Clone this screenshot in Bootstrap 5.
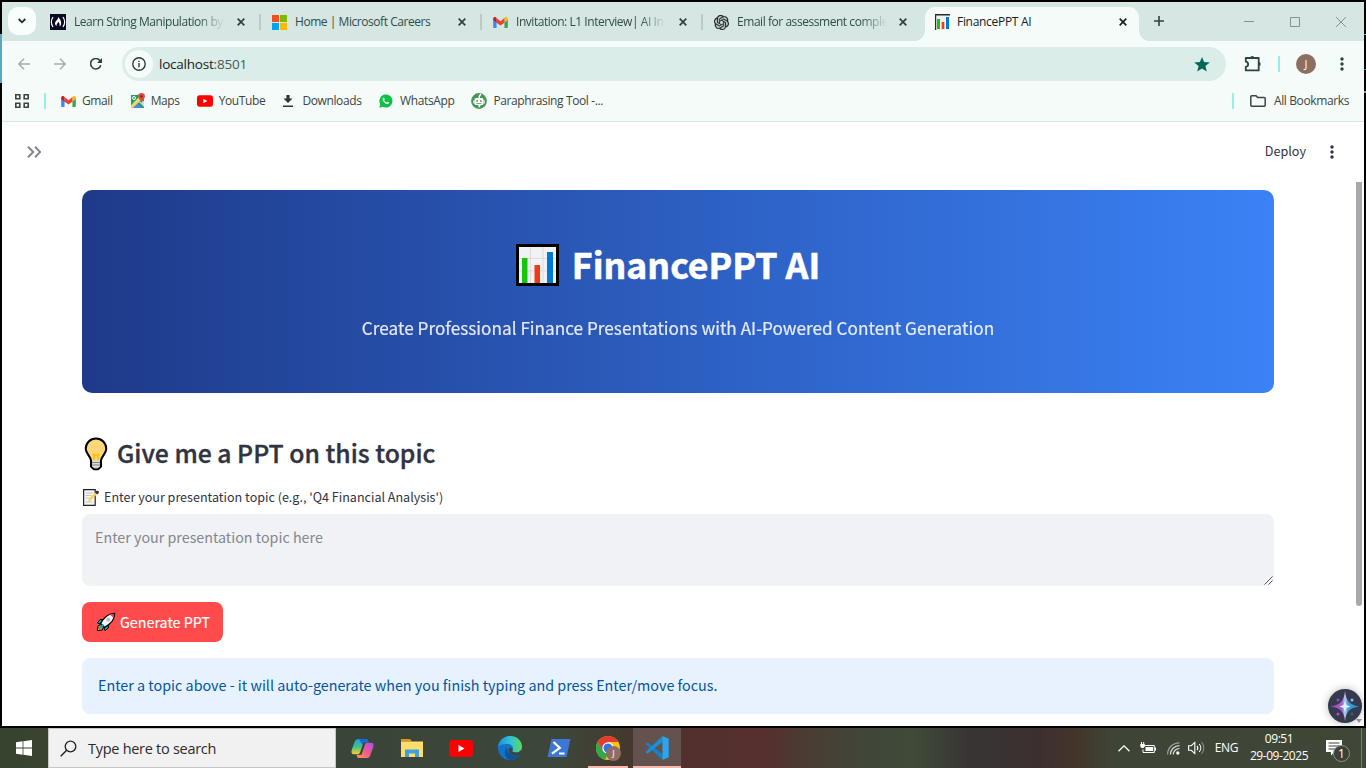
<!DOCTYPE html>
<html lang="en">
<head>
<meta charset="utf-8">
<meta name="viewport" content="width=device-width, initial-scale=1">
<title>FinancePPT AI</title>
<link href="https://cdn.jsdelivr.net/npm/bootstrap@5.3.0/dist/css/bootstrap.min.css" rel="stylesheet">
<style>
  html, body { height: 100%; overflow: hidden; }
  body { font-family: "Open Sans", "Noto Sans", sans-serif; font-size: 12px; line-height: 16px; background: #000; color: #30403d; }
  svg { display: block; flex: none; }
  .ui { white-space: nowrap; flex: none; }

  .desktop { width: 1366px; height: 768px; }
  .frame { height: 728px; padding: 2px; background: #000; }
  .edge-glow { left: 0; top: 34px; width: 2px; height: 49px; background: #5aa6c6; }
  .edge-ticks { right: 0; top: 34px; width: 2px; height: 60px; background: linear-gradient(#6fa9bd 1px, transparent 1px 35px, #3f7f99 35px 36px, transparent 36px 57px, #8a979c 57px 59px, transparent 59px); }
  .window { background: #f5fbf9; }

  /* tab strip */
  .tabstrip { height: 39px; background: #d6e6e2; border-top: 1px solid #dfeae7; }
  .tab-search { width: 28px; height: 28px; margin: 4px 0 0 6px; border-radius: 10px; background: #f8fefc; }
  .tabcell { width: 221px; height: 38px; padding-left: 10px; flex: none; }
  .tabcell.first { margin-left: 4px; }
  .tabcell .label { width: 150px; margin-left: 8px; white-space: nowrap; letter-spacing: -.45px; color: #2f4d48; }
  .tabcell .fade-end { -webkit-mask-image: linear-gradient(90deg, #000 124px, transparent 150px); mask-image: linear-gradient(90deg, #000 124px, transparent 150px); }
  .tabcell .sep { width: 2px; height: 16px; margin-left: 14px; background: #c1c9c7; }
  .tabcell.open { width: 214px; height: 34px; margin: 4px 0 0 1px; padding: 0 0 4px 10px; border-radius: 10px 10px 0 0; background: #f5fbf9; }
  .tabcell.open .label { margin-left: 7px; color: #17211f; letter-spacing: -.3px; }
  .foot { bottom: 0; width: 10px; height: 10px; }
  .foot.l { left: -10px; background: radial-gradient(circle at 0 0, transparent 9.5px, #f5fbf9 10px); }
  .foot.r { right: -10px; background: radial-gradient(circle at 100% 0, transparent 9.5px, #f5fbf9 10px); }

  /* toolbar */
  .toolrow { height: 46px; }
  .omni { width: 1104px; height: 34px; border-radius: 17px; background: #daede8; }
  .host { margin-left: 6px; font-size: 13.5px; letter-spacing: -.22px; color: #17211f; }
  .host span { color: #4a5a57; }
  .info-dot { width: 28px; height: 28px; background: #f5fbf9; margin-left: 3px; }
  .accent { width: 2px; height: 16px; background: #95f2e2; }
  .avatar { width: 20px; height: 20px; background: #8d6e63; color: #fff; font-size: 11px; }
  .bookmarks { height: 35px; padding-bottom: 6px; border-bottom: 1px solid #d5e5e1; color: #3c4543; }
  .bookmarks .ui { letter-spacing: -.38px; }

  /* page */
  .page { height: 604px; background: #fff; color: #31333f; font-family: "Noto Sans CJK SC", sans-serif; }
  .apphead { height: 60px; }
  .deploy { font-size: 12.6px; padding-bottom: 2px; }
  .content { width: 1192px; margin-left: 80px; }
  .hero { height: 203px; margin-top: 8px; padding-top: 51px; border-radius: 10px; background: linear-gradient(90deg, #1e3a8a 0%, #3b82f6 100%); color: #fff; }
  .hero h1 { gap: 13px; margin: 0 20px 25px 0; font-size: 35.6px; line-height: 48px; font-weight: 700; -webkit-text-stroke: .6px #fff; }
  .hero h1 .ui { padding-bottom: 2px; }
  .hero p { font-size: 17.2px; line-height: 28px; opacity: .87; -webkit-text-stroke: .2px #fff; }
  .topic-title { gap: 7px; margin: 43px 0 15px; font-size: 24.75px; line-height: 36px; font-weight: 500; height: 36px; -webkit-text-stroke: .35px #31333f; }
  .topic-title .ui { padding-bottom: 4px; }
  .field-label { gap: 5px; margin-bottom: 7px; font-size: 12.55px; line-height: 20px; }
  .field { height: 72px; border-radius: 8px; background: #f0f2f6; border: 0; padding: 11px 13px; font-size: 14.3px; line-height: 24px; resize: none; }
  .field::placeholder { color: #85868f; opacity: 1; }
  .grip { right: 1px; bottom: 1px; }
  .go, .go:hover { width: 141px; height: 40px; border-radius: 8px; background: #ff4b4b; color: #fff; font-size: 14.3px; gap: 4px; -webkit-text-stroke: .15px #fff; }
  .note { height: 56px; padding-bottom: 2px; border-radius: 8px; background: #e8f2ff; color: #0054a3; font-size: 14.33px; }
  .scrollthumb { left: 1354px; top: 60px; width: 6px; height: 424px; background: #a8a8ad; border-radius: 0 0 3px 3px; }
  .scrollend { right: 2px; bottom: 3px; }
  .assist { right: 2px; bottom: 3px; width: 34px; height: 34px; background: #363a4d; box-shadow: 0 0 8px rgba(0,0,0,.28); }

  /* taskbar */
  .taskbar { height: 40px; color: #fff;
    background: linear-gradient(90deg, #38432f 0, #3b4537 340px, #3d4739 560px, #45382f 630px, #532f2e 690px, #55302f 770px, #4b3b33 800px, #40473a 870px, #3f4a38 915px, #383434 970px, #3c302f 1040px, #44342a 1075px, #3e4436 1110px, #3f4737 1366px); }
  .seek { width: 288px; height: 40px; background: #f1f1f1; border: 1px solid #c6c6c6; color: #2b2b2b; font-size: 14.5px; letter-spacing: -.28px; }
  .seek .ui { padding-top: 2px; }
  .app { width: 49px; height: 40px; }
  .app.live::after { content: ""; position: absolute; bottom: 0; left: 5px; right: 4px; height: 2px; background: #f6b8ae; }
  .app.front { width: 48px; margin-left: 1px; background: #64524f; }
  .app.front::after { left: 0; right: 0; }
  .mini { right: 11px; bottom: 7px; width: 15px; height: 15px; background: #8d6e63; font-size: 9px; line-height: 15px; }
  .eng { letter-spacing: -.4px; }
  .clock { width: 58px; line-height: 17.5px; letter-spacing: -.45px; }
  .count { left: 7px; top: 5px; width: 17px; height: 17px; background: #3b4039; border: 1px solid #8d938a; font-size: 12px; line-height: 15px; }
  .peek { width: 1px; height: 40px; margin-left: 19px; margin-right: 4px; background: #767c70; }
</style>
</head>
<body>
<svg width="0" height="0" class="position-absolute">
  <defs>
    <symbol id="x" viewBox="0 0 8 8"><path d="M.7.7l6.600 6.600M7.300.7L.7 7.300" stroke="currentColor" stroke-width="1.700"/></symbol>
    <symbol id="gmail" viewBox="0 0 16 12"><path d="M0 2v8.600c0 .8.600 1.400 1.300 1.400h2.400V4.500z" fill="#4285f4"/><path d="M16 2v8.600c0 .8-.6 1.400-1.300 1.400h-2.400V4.500z" fill="#34a853"/><path d="M12.300 1.200v5L16 3.400V2c0-1.700-1.900-2.500-3.200-1.500z" fill="#fbbc04"/><path d="M3.700 6.200V1.200L8 4.500l4.300-3.300v5L8 9.400z" fill="#ea4335"/><path d="M0 2v1.400l3.700 2.800V1.200L3.200.5C1.900-.5 0 .3 0 2z" fill="#c5221f"/></symbol>
    <symbol id="chart" viewBox="0 0 43 42"><path fill="#000" d="M0 0h43v42H0z"/><path fill="#f2f2f2" d="M3 3h37v36H3z"/><path d="M14.500 3v36M27 3v36M3 14.500h37M3 27h37" stroke="#dcdcdc"/><path fill="#16c60c" d="M6 14h5.500v25H6z"/><path fill="#f03a17" d="M18.500 21H24v18h-5.500z"/><path fill="#0078d7" d="M31 8h6v31h-6z"/></symbol>
    <symbol id="play" viewBox="0 0 24 17"><rect width="24" height="17" rx="4" fill="#f00"/><path d="M9.500 5v7l6-3.500z" fill="#fff"/></symbol>
    <symbol id="dots" viewBox="0 0 4 14"><g fill="currentColor"><circle cx="2" cy="2" r="1.700"/><circle cx="2" cy="7" r="1.700"/><circle cx="2" cy="12" r="1.700"/></g></symbol>
  </defs>
</svg>

<div class="desktop d-flex flex-column position-relative overflow-hidden">
  <div class="frame">
    <div class="window h-100 overflow-hidden">

      <div class="tabstrip d-flex">
        <div class="tab-search d-flex align-items-center justify-content-center">
          <svg width="8" height="6" viewBox="0 0 8 6"><path d="M.7 1L4 4.300 7.300 1" fill="none" stroke="#1c2b28" stroke-width="1.800"/></svg>
        </div>
        <div class="tabcell first d-flex align-items-center">
          <svg width="16" height="16" viewBox="0 0 16 16"><path fill="#0a0a23" d="M0 0h16v16H0z"/><path d="M3 3Q-.3 8 3 13M13 3q3.300 5 0 10" fill="none" stroke="#fff" stroke-width="1.200"/><path d="M8 3c2.500 2 3.500 5 3 7.500-.3 1-1 1.500-1.700 1.700C10.500 10 8.700 9 8.600 7.500 7.800 9.500 6 10 6.800 12.200 4 10.500 5 8 6.500 6.500 7.500 5.500 8.200 4.500 8 3z" fill="#fff"/></svg>
          <div class="label fade-end">Learn String Manipulation by</div>
          <svg class="ms-auto" width="8" height="8"><use href="#x"/></svg><span class="sep"></span>
        </div>
        <div class="tabcell d-flex align-items-center" style="padding-left:11px">
          <svg width="15" height="15" viewBox="0 0 15 15"><path fill="#f25022" d="M0 0h7v7H0z"/><path fill="#7fba00" d="M8 0h7v7H8z"/><path fill="#00a4ef" d="M0 8h7v7H0z"/><path fill="#ffb900" d="M8 8h7v7H8z"/></svg>
          <div class="label">Home | Microsoft Careers</div>
          <svg class="ms-auto" width="8" height="8"><use href="#x"/></svg><span class="sep"></span>
        </div>
        <div class="tabcell d-flex align-items-center" style="padding-left:11px">
          <svg width="15" height="11"><use href="#gmail"/></svg>
          <div class="label fade-end">Invitation: L1 Interview| AI In</div>
          <svg class="ms-auto" width="8" height="8"><use href="#x"/></svg><span class="sep"></span>
        </div>
        <div class="tabcell d-flex align-items-center" style="padding-left:11px">
          <svg width="15" height="15" viewBox="0 0 24 24" fill="#202826"><path d="M22.280 9.820a5.980 5.980 0 0 0-.52-4.910 6.050 6.050 0 0 0-6.510-2.900A6.070 6.070 0 0 0 4.980 4.180a5.980 5.980 0 0 0-4 2.900 6.050 6.050 0 0 0 .74 7.100 5.980 5.980 0 0 0 .51 4.910 6.050 6.050 0 0 0 6.520 2.900A5.980 5.980 0 0 0 13.260 24a6.060 6.060 0 0 0 5.770-4.210 5.990 5.990 0 0 0 4-2.900 6.060 6.060 0 0 0-.75-7.070zm-9.020 12.610a4.480 4.480 0 0 1-2.880-1.040l.14-.08 4.780-2.760a.8.8 0 0 0 .39-.68v-6.740l2.020 1.170.04.050v5.580a4.500 4.500 0 0 1-4.490 4.500zM3.600 18.300a4.470 4.470 0 0 1-.54-3.010l.14.080 4.780 2.760a.77.77 0 0 0 .78 0l5.840-3.370v2.330l-.03.060L9.740 19.950A4.500 4.500 0 0 1 3.600 18.300zM2.340 7.900a4.480 4.480 0 0 1 2.370-1.980v5.680a.77.77 0 0 0 .38.680l5.820 3.350-2.020 1.170h-.07L3.990 14A4.500 4.500 0 0 1 2.340 7.870zm16.600 3.860l-5.840-3.390L15.120 7.200h.07l4.830 2.790a4.490 4.490 0 0 1-.68 8.100v-5.670a.79.79 0 0 0-.4-.66zm2.010-3.020l-.14-.09-4.780-2.780a.78.78 0 0 0-.78 0L9.410 9.230V6.900l.03-.06 4.830-2.790a4.500 4.500 0 0 1 6.680 4.660zM8.310 12.860l-2.020-1.160-.04-.060V6.070a4.500 4.500 0 0 1 7.380-3.450l-.14.080-4.780 2.760a.8.800 0 0 0-.4.680zm1.090-2.360l2.600-1.500 2.600 1.500v3l-2.600 1.500-2.600-1.500z" stroke="#202826" stroke-width=".5"/></svg>
          <div class="label fade-end">Email for assessment comple</div>
          <svg class="ms-auto" style="margin-right:17px" width="8" height="8"><use href="#x"/></svg>
        </div>
        <div class="tabcell open d-flex align-items-center position-relative">
          <span class="foot l position-absolute"></span><span class="foot r position-absolute"></span>
          <svg width="15" height="16" viewBox="0 0 15 16"><path d="M0 0h15v16H0z" fill="#f4eff2"/><path d="M.5 16V.7H15" fill="none" stroke="#2a2a2a" stroke-width="1.400"/><path d="M2 5h3v10H2z" fill="#16c60c"/><path d="M6.700 8h2.600v7H6.700z" fill="#f03a17"/><path d="M11 3h3v12h-3z" fill="#0078d7"/></svg>
          <div class="label">FinancePPT AI</div>
          <svg class="ms-auto" style="margin-right:12px" width="8" height="8" color="#17211f"><use href="#x"/></svg>
        </div>
        <svg style="margin:12px 0 0 14px" width="12" height="12" viewBox="0 0 12 12"><path d="M6 1v10M1 6h10" stroke="#33423f" stroke-width="1.600"/></svg>
        <div class="d-flex align-items-center ms-auto" style="gap:36px;padding-right:18px">
          <svg width="10" height="10"><path d="M0 4.500h10" stroke="#86918e"/></svg>
          <svg width="10" height="10"><path d="M.5.500h9v9h-9z" fill="none" stroke="#86918e"/></svg>
          <svg width="10" height="10"><path d="M0 0l10 10M10 0L0 10" stroke="#86918e"/></svg>
        </div>
      </div>

      <div class="toolrow d-flex align-items-center">
        <svg style="margin-left:16px" width="12" height="12" viewBox="0 0 12 12"><path d="M12 6H1M6 .7L.8 6 6 11.300" fill="none" stroke="#a5adab" stroke-width="1.500"/></svg>
        <svg style="margin-left:24px" width="12" height="12" viewBox="0 0 12 12"><path d="M0 6h11M6 .7L11.200 6 6 11.300" fill="none" stroke="#a5adab" stroke-width="1.500"/></svg>
        <svg style="margin-left:24px" width="12" height="12" viewBox="0 0 12 12"><path d="M10.800 7.200A5.200 5.200 0 1 1 10 2.700" fill="none" stroke="#2f403d" stroke-width="1.600"/><path d="M12 0v5H7z" fill="#2f403d"/></svg>
        <div class="omni d-flex align-items-center" style="margin-left:20px">
          <div class="info-dot rounded-circle d-flex align-items-center justify-content-center">
            <svg width="14" height="14" viewBox="0 0 14 14"><circle cx="7" cy="7" r="6.200" fill="none" stroke="#2f3b39" stroke-width="1.400"/><path d="M6.300 6h1.400v4.300H6.300zM6.300 3.700h1.400v1.400H6.300z" fill="#2f3b39"/></svg>
          </div>
          <div class="ui host">localhost<span>:8501</span></div>
          <svg class="ms-auto" style="margin-right:16px" width="16" height="15" viewBox="0 0 16 15"><path d="M8 0l2.100 5.100 5.700.4-4.400 3.600 1.400 5.500L8 11.600l-4.800 3 1.400-5.500L.2 5.500l5.700-.4z" fill="#00695c"/></svg>
        </div>
        <svg style="margin-left:18px" width="18" height="18" viewBox="0 0 18 18"><path d="M1.800 3h12.900v12.400H1.800v-3.600c3.100-.4 3.100-4.800 0-5.200z" fill="none" stroke="#2b4540" stroke-width="1.800" stroke-linejoin="round"/><path d="M6.200 3a2 2 0 0 1 4 0zM14.700 7a2 2 0 0 1 0 4z" fill="#2b4540"/></svg>
        <span class="accent" style="margin-left:16px"></span>
        <div class="avatar rounded-circle d-flex align-items-center justify-content-center" style="margin-left:16px">J</div>
        <svg style="margin-left:24px" width="4" height="14" color="#2b4540"><use href="#dots"/></svg>
      </div>

      <div class="bookmarks d-flex align-items-center">
        <svg style="margin-left:13px" width="14" height="14" viewBox="0 0 14 14"><path d="M.8.800h4v4h-4zM9.200.800h4v4h-4zM.8 9.200h4v4h-4zM9.200 9.200h4v4h-4z" fill="none" stroke="#3c4543" stroke-width="1.600"/></svg>
        <span class="accent" style="margin-left:15px"></span>
        <svg style="margin-left:15px" width="15" height="11"><use href="#gmail"/></svg>
        <div class="ui" style="margin-left:6px">Gmail</div>
        <svg style="margin-left:17px" width="16" height="16" viewBox="0 0 16 16"><path d="M1 2h13v13H1z" fill="#1ea362"/><path d="M1 12.500L11 2h3v2L3 15H1z" fill="#fff3d0"/><path d="M1 13L10 4l1.500 1.500L3 15H1z" fill="#ffd04b"/><path d="M3 15l4.500-4.600L12 15z" fill="#4a89f3"/><path d="M9 9l5 5V8z" fill="#d5d9dc"/><circle cx="4" cy="5" r="1.500" fill="none" stroke="#fff"/><path d="M11.500 0a3.400 3.400 0 0 1 3.400 3.500c0 2.500-2.600 3-3.300 7-.8-4-3.500-4.600-3.500-7A3.400 3.400 0 0 1 11.500 0z" fill="#dc4b3e"/><circle cx="11.500" cy="3.500" r="1.200" fill="#8c2a1f"/></svg>
        <div class="ui" style="margin-left:5px">Maps</div>
        <svg style="margin-left:17px" width="16" height="12"><use href="#play"/></svg>
        <div class="ui" style="margin-left:6px">YouTube</div>
        <svg style="margin-left:18px" width="10" height="12" viewBox="0 0 10 12"><path d="M3.400 0h3.200v3.500H9.500L5 8 .5 3.500h2.900zM0 10.400h10V12H0z" fill="#2f3635"/></svg>
        <div class="ui" style="margin-left:9px">Downloads</div>
        <svg style="margin-left:17.500px" width="14" height="14" viewBox="0 0 15 15"><path d="M.3 14.700l1-3.800a7 7 0 1 1 2.700 2.700z" fill="#0cc143"/><path d="M5.200 3.900c-.6-.1-1.400.6-1.400 1.700 0 2 3 5.100 5.300 5.100 1.200 0 2-.7 1.900-1.500-.1-.4-1.600-1.100-1.900-1l-.9 1C7.200 9 5.900 7.700 5.500 6.700l.6-.9c0-.5-.4-1.800-.9-1.900z" fill="#fff"/></svg>
        <div class="ui" style="margin-left:7px">WhatsApp</div>
        <svg style="margin-left:17px" width="16" height="16" viewBox="0 0 16 16"><circle cx="8" cy="8" r="7.900" fill="#499557"/><path d="M8.300 5V3.200L10 .8" stroke="#fff" stroke-width="1.500" fill="none"/><rect x="3.500" y="5" width="9" height="7" rx="1.500" fill="#fff"/><path d="M2.300 7.500h1.200v3H2.300zM12.500 7.500h1.200v3h-1.200zM7 12h3l-2 3z" fill="#fff"/><path d="M5.300 7.200h1.700v1.600H5.300zM9 7.200h1.700v1.600H9zM5.500 10.300h5v.8h-5z" fill="#499557"/></svg>
        <div class="ui" style="margin-left:6px">Paraphrasing Tool -...</div>
        <div class="d-flex align-items-center ms-auto" style="padding-right:15px">
          <span class="accent"></span>
          <svg style="margin-left:16px" width="16" height="12" viewBox="0 0 16 12"><path d="M.8 10.300V1.700c0-.5.300-.9.900-.9H6l1.600 1.700h6.700c.6 0 .9.400.9.900v6.900c0 .5-.3.900-.9.900H1.700c-.6 0-.9-.4-.9-.9z" fill="none" stroke="#3c4543" stroke-width="1.500"/></svg>
          <div class="ui" style="margin-left:8px">All Bookmarks</div>
        </div>
      </div>

      <div class="page position-relative overflow-hidden">
        <div class="apphead d-flex align-items-center">
          <svg style="margin-left:25px" width="14" height="12" viewBox="0 0 14 12"><path d="M1 .8L6.200 6 1 11.200M8 .8L13.200 6 8 11.200" fill="none" stroke="#83858e" stroke-width="2"/></svg>
          <div class="ui deploy ms-auto">Deploy</div>
          <svg style="margin:0 30px 0 24px" width="4" height="14"><use href="#dots"/></svg>
        </div>
        <div class="content">
          <div class="hero d-flex flex-column align-items-center">
            <h1 class="d-flex align-items-center" style="height:48px"><svg width="43" height="42"><use href="#chart"/></svg><span class="ui">FinancePPT AI</span></h1>
            <p class="ui mb-0">Create Professional Finance Presentations with AI-Powered Content Generation</p>
          </div>
          <h2 class="topic-title d-flex align-items-center">
            <svg width="28" height="34" viewBox="0 0 28 34"><path d="M14 1.500A10.300 10.300 0 0 0 3.700 11.800c0 4.700 4.800 7.200 5.300 11.500v6.200l3 2.700h4l3-2.700v-6.200c.5-4.300 5.300-6.800 5.300-11.500A10.300 10.300 0 0 0 14 1.500z" fill="#ffd679" stroke="#000" stroke-width="2"/><path d="M10 23.500h8v6l-2.400 1.800h-3.200L10 29.500z" fill="#d8d8d8"/><path d="M10 25.500h8M10 28h8" stroke="#888"/><path d="M12 23v-5l-1.500-1M16 23v-5l1.500-1M12 18h4" fill="none" stroke="#ffb900" stroke-width="1.500"/></svg>
            <span class="ui">Give me a PPT on this topic</span>
          </h2>
          <label class="field-label d-flex align-items-center" for="topic">
            <svg width="17" height="17" viewBox="0 0 17 17"><path d="M1.600.700h11.600v15.600H1.600z" fill="#f5f5f5" stroke="#222" stroke-width="1.200"/><path d="M3.500 4h7M3.500 6.500h6M3.500 9h4M3.500 13h7" stroke="#c4c4c4"/><path d="M6 12.500l1-3L14 2.800l1.700 1.600-7 7.200z" fill="#ffcf58"/><path d="M13 3.300l1.300-1.500 2.400.3.100 1.900-1.600 1.500z" fill="#333"/></svg>
            <span class="ui">Enter your presentation topic (e.g., 'Q4 Financial Analysis')</span>
          </label>
          <div class="position-relative">
            <textarea id="topic" class="field d-block w-100" placeholder="Enter your presentation topic here"></textarea>
            <svg class="grip position-absolute" width="9" height="9" viewBox="0 0 9 9"><path d="M.5 8.500l8-8M4.500 8.500l4-4" stroke="#555"/></svg>
          </div>
          <button class="go btn d-flex align-items-center border-0 p-0 mt-3" type="button">
            <svg style="margin-left:14px" width="20" height="20" viewBox="0 0 20 20"><path d="M1.300 18.700l.8-5 2.600-.9 2.600 2.600-.9 2.600z" fill="#f7941d" stroke="#000"/><path d="M6.500 7.500H4.200L1.300 11l3 1zM12.500 13.500v2.300L9 18.700l-1-3z" fill="#00a9d6" stroke="#000"/><path d="M18.700 1.300c.3 5.200-2.700 10-10.200 14l-3.800-3.800C8.700 4 13.500 1 18.700 1.300z" fill="#f4f4f4" stroke="#000" stroke-width="1.200"/><path d="M18.200 1.800c-1.600 0-3 .2-4.200.7l3.500 3.500c.5-1.200.7-2.600.7-4.200z" fill="#e8303a"/><circle cx="12.300" cy="7.700" r="1.900" fill="#b8bcc2"/><path d="M3.500 16.500l4-4" stroke="#00a9d6" stroke-width="2"/></svg>
            <span class="ui">Generate PPT</span>
          </button>
          <div class="note d-flex align-items-center px-3 mt-3"><span class="ui">Enter a topic above - it will auto-generate when you finish typing and press Enter/move focus.</span></div>
        </div>
        <div class="scrollthumb position-absolute"></div>
        <svg class="scrollend position-absolute" width="6" height="4"><path d="M0 0h6L3 4z" fill="#9a9a9f"/></svg>
        <div class="assist position-absolute rounded-circle">
          <svg width="34" height="34" viewBox="0 0 34 34"><defs><linearGradient id="g1"><stop offset="0" stop-color="#c23fc0"/><stop offset=".4" stop-color="#a66ad8"/><stop offset=".5" stop-color="#c9dcff"/><stop offset=".6" stop-color="#4aa6e4"/><stop offset="1" stop-color="#1b8fdc"/></linearGradient></defs><path d="M17 2c1 9.500 4.500 14 14.500 15.500C21.500 19 18 22.500 17 32c-1-9.500-4.500-13-14.500-14.500C12.500 16 16 11.500 17 2z" fill="url(#g1)" fill-opacity=".9"/><path d="M17 12l1.500 4 4 1.500-4 1.500L17 23l-1.500-4-4-1.500 4-1.500z" fill="#d6f2ff"/><circle cx="10" cy="11" r="1.500" fill="#8a4fc0"/><circle cx="24" cy="11" r="1.500" fill="#7fc4ec"/><circle cx="10" cy="25" r="1.500" fill="#b04bd0"/><circle cx="24" cy="25" r="1.400" fill="#2a648f"/></svg>
        </div>
      </div>
    </div>
  </div>
  <span class="edge-glow position-absolute"></span>
  <span class="edge-ticks position-absolute"></span>

  <div class="taskbar d-flex align-items-center">
    <svg style="margin:0 16px" width="16" height="16" viewBox="0 0 16 16"><path d="M0 2.200L6.600 1.300v6.300H0zM7.400 1.200L16 0v7.600H7.400zM0 8.400h6.600v6.300L0 13.800zM7.400 8.400H16V16l-8.600-1.200z" fill="#fff"/></svg>
    <div class="seek d-flex align-items-center">
      <svg style="margin-left:11px" width="17" height="17" viewBox="0 0 17 17"><circle cx="10.500" cy="6.500" r="5.300" fill="none" stroke="#222" stroke-width="1.300"/><path d="M6.700 10.300L.7 16.300" stroke="#222" stroke-width="1.400"/></svg>
      <span class="ui" style="margin-left:11px">Type here to search</span>
    </div>
    <div class="app d-flex align-items-center justify-content-center" style="margin-left:2px">
      <svg width="23" height="21" viewBox="0 0 24 22"><defs><linearGradient id="c1" x2="0" y2="1"><stop offset="0" stop-color="#1fa2f0"/><stop offset=".5" stop-color="#3fbf8a"/><stop offset="1" stop-color="#f5d32f"/></linearGradient><linearGradient id="c2" x1="1" x2="0" y2="1"><stop offset="0" stop-color="#a84df0"/><stop offset=".5" stop-color="#ef5a93"/><stop offset="1" stop-color="#ff9a4d"/></linearGradient></defs><path d="M8 1h7.500c2 0 2.200 1.500 2.700 3.500H13L9.500 15c-.6 1.700-1.500 2-3 2H3c-2.500 0-3-2-2.300-4.500L4 3.500C4.600 2 6 1 8 1z" fill="url(#c1)"/><path d="M16 21H8.500c-2 0-2.200-1.500-2.700-3.500H11L14.500 7c.6-1.700 1.500-2 3-2H21c2.500 0 3 2 2.300 4.500L20 18.500c-.6 1.500-2 2.500-4 2.500z" fill="url(#c2)"/><path d="M8 1h7.500c2 0 2.200 1.500 2.700 3.500H13L12 7z" fill="#1669d8"/></svg>
    </div>
    <div class="app d-flex align-items-center justify-content-center">
      <svg width="22" height="18" viewBox="0 0 22 18"><path d="M0 0h9l2 2.500H0z" fill="#d99a0e"/><path d="M0 2.500h22V18H0z" fill="#ffdc6e"/><path d="M4 18V10.500h14V18h-4v-3.500H8V18z" fill="#3f9fe0"/></svg>
    </div>
    <div class="app d-flex align-items-center justify-content-center"><svg width="24" height="17"><use href="#play"/></svg></div>
    <div class="app d-flex align-items-center justify-content-center">
      <svg width="24" height="24" viewBox="0 0 24 24"><defs><linearGradient id="e1"><stop offset="0" stop-color="#1b8fe0"/><stop offset=".5" stop-color="#2fc0d8"/><stop offset="1" stop-color="#5fd95a"/></linearGradient></defs><circle cx="12" cy="12" r="12" fill="#1273c8"/><path d="M0 11.500C.5 5 5.500 0 12 0c7 0 12 5 12 10.500 0 4-3 6-6 6-2.500 0-4-.8-3.700-1.700 1.500-1.600 1-6.800-4.800-6.800C4.500 8 1 9 0 11.500z" fill="url(#e1)"/><path d="M9 11.500c-1 5 3.500 9 12.500 7.700A12 12 0 0 1 12 24C7 23 5 15 9 11.500z" fill="#0c529c"/><path d="M14.300 14.800c-.3.900 1.200 1.700 3.700 1.700 2 0 4-.9 5.100-2.600L24 16l-2.500 3.200C14 20.300 9.800 17 10.500 13.500c.3-1.500 2-2.500 3.500-1.300.8.800.8 1.900.3 2.600z" fill="#3c4739"/></svg>
    </div>
    <div class="app d-flex align-items-center justify-content-center">
      <svg width="24" height="18" viewBox="0 0 24 18"><path d="M4.500 0H23.500L19.500 18H.5z" fill="#3d76d4"/><path d="M6.500 3l6.300 6L5 14.700M12 14.500h5.500" fill="none" stroke="#fff" stroke-width="2.200"/></svg>
    </div>
    <div class="app live d-flex align-items-center justify-content-center position-relative">
      <svg width="24" height="24" viewBox="0 0 24 24"><circle cx="12" cy="12" r="12" fill="#fbc116"/><path d="M1.600 6A12 12 0 0 1 22.400 6H12L7 15z" fill="#e33b2e"/><path d="M1.600 6L7 15l5 3-3 5.600A12 12 0 0 1 1.600 6z" fill="#2da94f"/><circle cx="12" cy="12" r="5.700" fill="#fff"/><circle cx="12" cy="12" r="4.500" fill="#2b75e8"/></svg>
      <span class="mini position-absolute rounded-circle text-center">J</span>
    </div>
    <div class="app live front d-flex align-items-center justify-content-center position-relative">
      <svg width="24" height="24" viewBox="0 0 24 24"><path d="M.5 7.900L2.300 6.300 17.600 18v6z" fill="#1481c8"/><path d="M.5 16.100l1.800 1.600L17.600 6V0z" fill="#1a90da"/><path d="M17.500 0l6.200 2.800v18.400L17.500 24z" fill="#2aa5ee"/></svg>
    </div>
    <div class="d-flex align-items-center ms-auto">
      <svg width="12" height="7" viewBox="0 0 12 7"><path d="M.5 6.300L6 .9l5.500 5.400" fill="none" stroke="#fff" stroke-width="1.300"/></svg>
      <svg style="margin-left:10px" width="16" height="12" viewBox="0 0 16 12"><path d="M4.500 3.500h9.800v7H3V7.500" fill="none" stroke="#fff"/><path d="M5.500 5h7.500v4H5.500zM14.800 5.500H16v3h-1.200zM.3 2h4.500v2.500L3.500 6h-2L.3 4.500zM1 0h1v2H1zM3.200 0h1v2h-1z" fill="#fff"/></svg>
      <svg style="margin-left:11px" width="13" height="13" viewBox="0 0 13 13"><g fill="none" stroke="#dfe2dd" stroke-width="1.200"><path d="M.6 12.500C.6 6 5.500.9 12.500.9" stroke-opacity=".6"/><path d="M3.400 12.500c0-5 4-8.800 9.100-8.800"/><path d="M6.300 12.500c0-3.400 2.700-6 6.200-6"/></g><circle cx="10.800" cy="11" r="1.700" fill="#fff"/></svg>
      <svg style="margin-left:8px" width="17" height="14" viewBox="0 0 17 14"><path d="M.6 4.700h2.700L6.800 1.400v11.200L3.300 9.300H.6z" fill="none" stroke="#fff" stroke-width="1.100"/><path d="M9 4.800c1 1.300 1 3.100 0 4.400M11.200 3c2 2.300 2 5.700 0 8" fill="none" stroke="#fff" stroke-width="1.100"/><path d="M13.500 1c3 3.400 3 8.600 0 12" fill="none" stroke="#8b9186" stroke-width="1.100"/></svg>
      <div class="ui eng" style="margin-left:10px">ENG</div>
      <div class="ui clock d-flex flex-column align-items-center" style="margin:-2px 0 0 12px"><span>09:51</span><span>29-09-2025</span></div>
      <div class="position-relative" style="margin-left:18px">
        <svg width="16" height="16" viewBox="0 0 16 16"><path d="M0 0h16v12H8.500L5 15.500V12H0z" fill="#fff"/><path d="M2.500 3h11M2.500 6h11M2.500 9h8" stroke="#3f4737" stroke-width="1.200"/></svg>
        <span class="count position-absolute rounded-circle text-center">1</span>
      </div>
      <span class="peek"></span>
    </div>
  </div>
</div>
<script src="https://cdn.jsdelivr.net/npm/bootstrap@5.3.0/dist/js/bootstrap.bundle.min.js"></script>
</body>
</html>
